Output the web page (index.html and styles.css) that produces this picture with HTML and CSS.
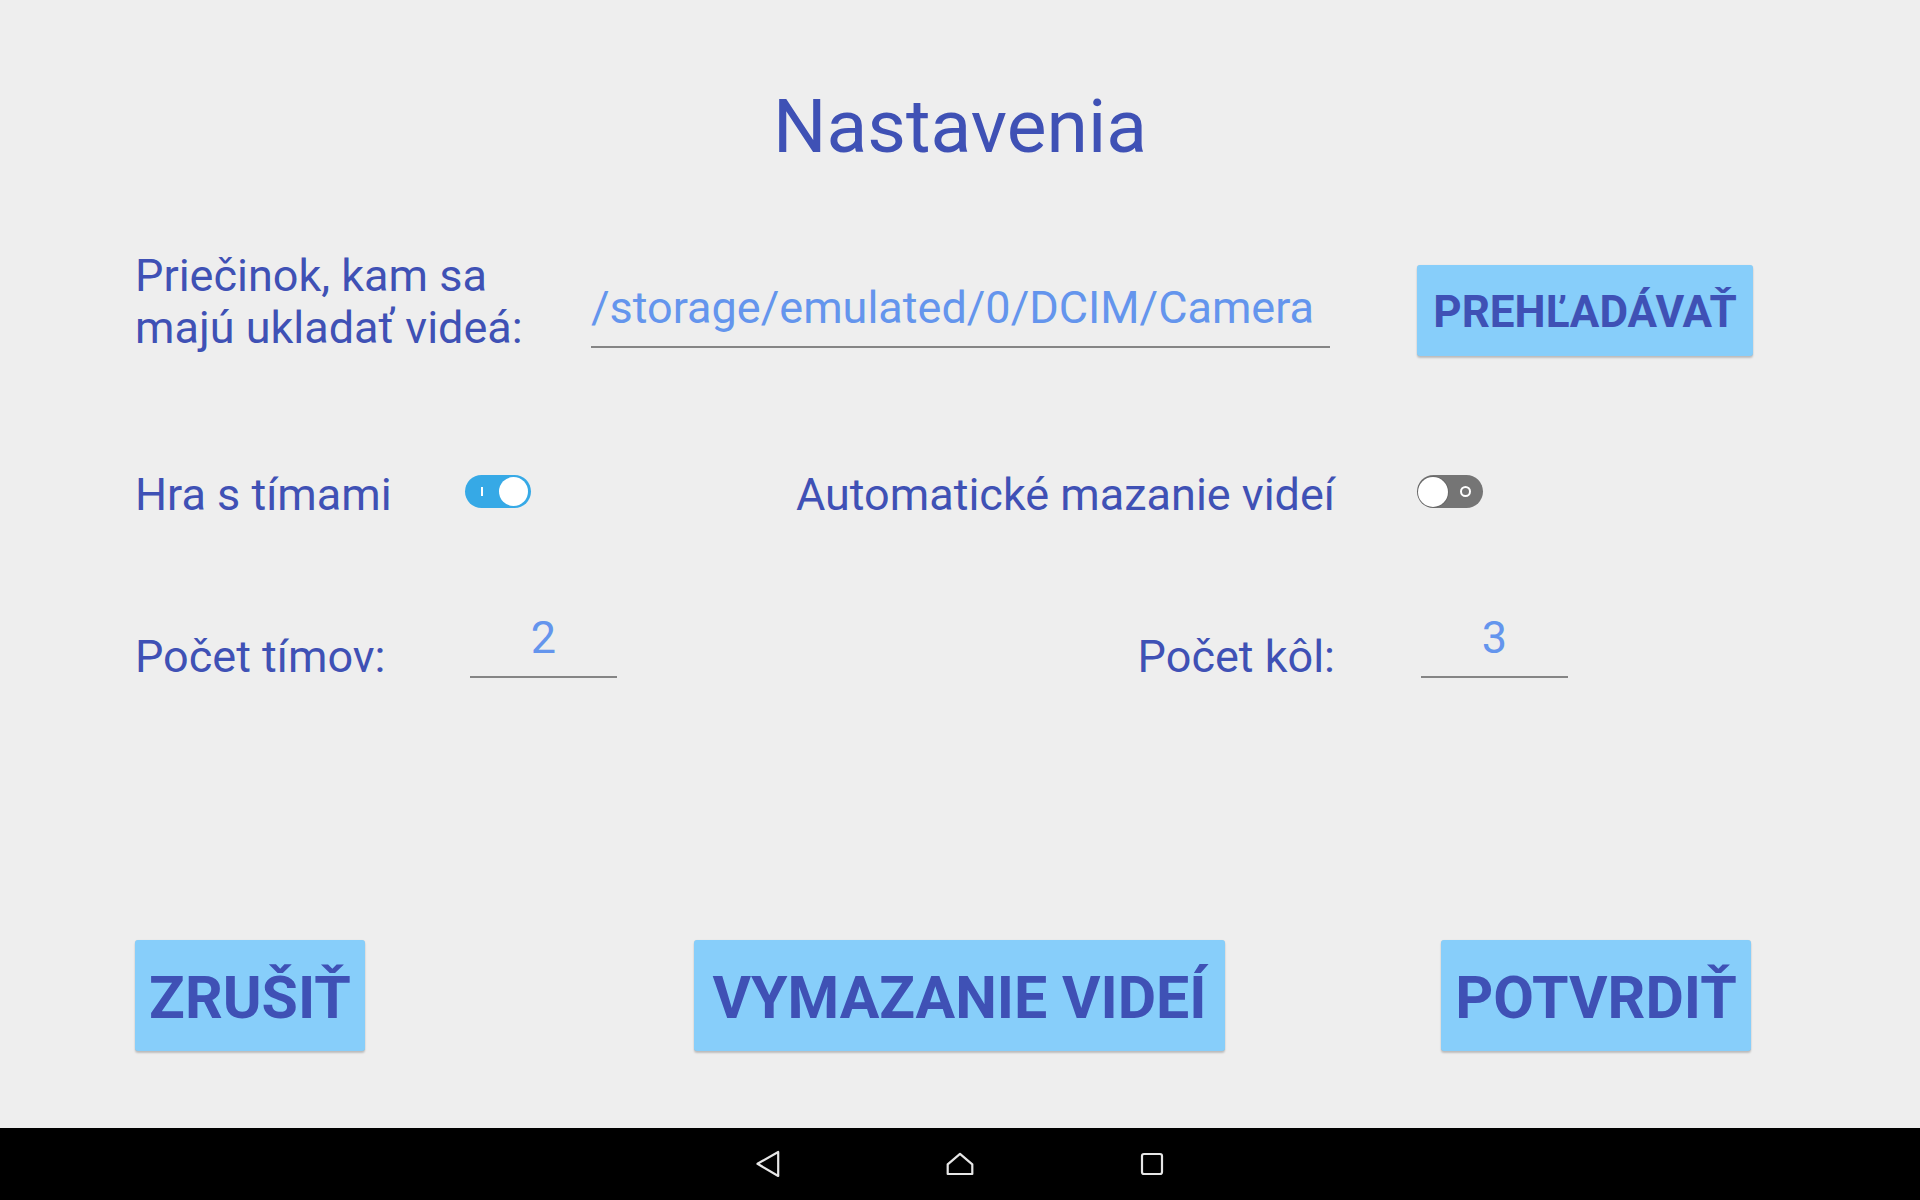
FILE: index.html
```html
<!DOCTYPE html>
<html lang="sk">
<head>
<meta charset="utf-8">
<title>Nastavenia</title>
<link rel="stylesheet" href="styles.css">
</head>
<body>
<main class="screen">
  <h1 class="title">Nastavenia</h1>

  <section class="row row-folder">
    <div class="label folder-label">Priečinok, kam sa<br>majú ukladať videá:</div>
    <div class="field path-field">/storage/emulated/0/DCIM/Camera</div>
    <div class="btn btn-browse">PREHĽADÁVAŤ</div>
  </section>

  <section class="row row-switches">
    <div class="label team-label">Hra s tímami</div>
    <div class="switch on"><span class="mark-on"></span><span class="thumb"></span></div>
    <div class="label auto-label">Automatické mazanie videí</div>
    <div class="switch off"><span class="thumb"></span><span class="mark-off"></span></div>
  </section>

  <section class="row row-counts">
    <div class="label teams-label">Počet tímov:</div>
    <div class="field num-field">2</div>
    <div class="label rounds-label">Počet kôl:</div>
    <div class="field num-field rounds-field">3</div>
  </section>

  <section class="row row-actions">
    <div class="btn btn-big btn-cancel">ZRUŠIŤ</div>
    <div class="btn btn-big btn-delete">VYMAZANIE VIDEÍ</div>
    <div class="btn btn-big btn-confirm">POTVRDIŤ</div>
  </section>
</main>

<nav class="navbar">
  <div class="nav-item">
    <svg width="28" height="28" viewBox="0 0 28 28"><path d="M3.5 13.8 L24.2 2 L24.2 26 Z" fill="none" stroke="#e6e6e6" stroke-width="2.2" stroke-linejoin="round"/></svg>
  </div>
  <div class="nav-item">
    <svg width="28" height="28" viewBox="0 0 28 28"><path d="M1.7 14.3 L14 3.8 L26.3 14.3 L26.3 24 L1.7 24 Z" fill="none" stroke="#e6e6e6" stroke-width="2.2" stroke-linejoin="round"/></svg>
  </div>
  <div class="nav-item">
    <svg width="28" height="28" viewBox="0 0 28 28"><rect x="4" y="4" width="20" height="20" rx="2" fill="none" stroke="#e6e6e6" stroke-width="2.2"/></svg>
  </div>
</nav>
</body>
</html>
```

FILE: styles.css
```css
html, body {
  margin: 0;
  padding: 0;
}

body {
  width: 1920px;
  height: 1200px;
  background: #eeeeee;
  font-family: Roboto, "Noto Sans", "Liberation Sans", sans-serif;
  color: #3f51b5;
  display: flex;
  flex-direction: column;
  overflow: hidden;
}

.screen {
  height: 1128px;
  display: flex;
  flex-direction: column;
}

.title {
  margin: 76px 0 0;
  font-size: 75px;
  line-height: 100px;
  font-weight: 400;
  text-align: center;
}

.row {
  display: flex;
  align-items: flex-start;
  padding-left: 135px;
}

.label {
  font-size: 45px;
  line-height: 52px;
  white-space: nowrap;
}

.field {
  font-size: 45px;
  line-height: 52px;
  color: #6495ed;
  border-bottom: 2px solid #858585;
  white-space: nowrap;
}

.btn {
  display: flex;
  align-items: center;
  justify-content: center;
  background: #87cefa;
  border-radius: 3px;
  box-shadow: 0 2px 2px rgba(0, 0, 0, 0.2), 0 0 1px rgba(0, 0, 0, 0.12);
  font-weight: 700;
  color: #3f51b5;
  white-space: nowrap;
  box-sizing: border-box;
}

/* Row 1 */
.row-folder {
  margin-top: 74px;
  height: 106px;
}

.folder-label {
  width: 456px;
}

.path-field {
  width: 739px;
  margin-top: 32px;
  padding-bottom: 12px;
}

.btn-browse {
  margin-left: 87px;
  margin-top: 15px;
  width: 336px;
  height: 91px;
  font-size: 44px;
  padding-top: 3px;
}

/* Row 2 */
.row-switches {
  margin-top: 113px;
  height: 52px;
}

.team-label {
  width: 330px;
}

.auto-label {
  width: 804px;
  text-align: right;
}

.switch {
  flex: none;
  width: 66px;
  height: 33px;
  margin-top: 6px;
  border-radius: 17px;
  display: flex;
  align-items: center;
  justify-content: space-between;
  box-sizing: border-box;
}

.switch.on {
  background: #36a9e6;
  padding: 0 3px 0 16px;
}

.switch.off {
  background: #757575;
  margin-left: 82px;
  padding: 0 12px 0 1px;
}

.thumb {
  width: 29px;
  height: 29px;
  border-radius: 50%;
  background: #ffffff;
}

.switch.off .thumb {
  width: 30px;
  height: 30px;
  box-shadow: 0 0 0 1px rgba(0, 0, 0, 0.12);
}

.mark-on {
  width: 2px;
  height: 9px;
  background: #ffffff;
}

.mark-off {
  width: 7px;
  height: 7px;
  border: 2px solid #ffffff;
  border-radius: 50%;
}

/* Row 3 */
.row-counts {
  margin-top: 91px;
  height: 71px;
}

.teams-label {
  width: 335px;
  margin-top: 19px;
}

.num-field {
  width: 147px;
  text-align: center;
  padding-bottom: 12px;
}

.rounds-label {
  width: 718px;
  margin-top: 19px;
  text-align: right;
}

.rounds-field {
  margin-left: 86px;
}

/* Row 4 */
.row-actions {
  margin-top: 257px;
}

.btn-big {
  height: 111px;
  font-size: 59px;
  padding-top: 4px;
}

.btn-cancel {
  width: 230px;
}

.btn-delete {
  width: 531px;
  margin-left: 329px;
}

.btn-confirm {
  width: 310px;
  margin-left: 216px;
}

/* Nav bar */
.navbar {
  height: 72px;
  background: #000000;
  display: flex;
  justify-content: center;
  align-items: center;
}

.nav-item {
  width: 192px;
  display: flex;
  justify-content: center;
  align-items: center;
}

.nav-item svg {
  display: block;
}
```
